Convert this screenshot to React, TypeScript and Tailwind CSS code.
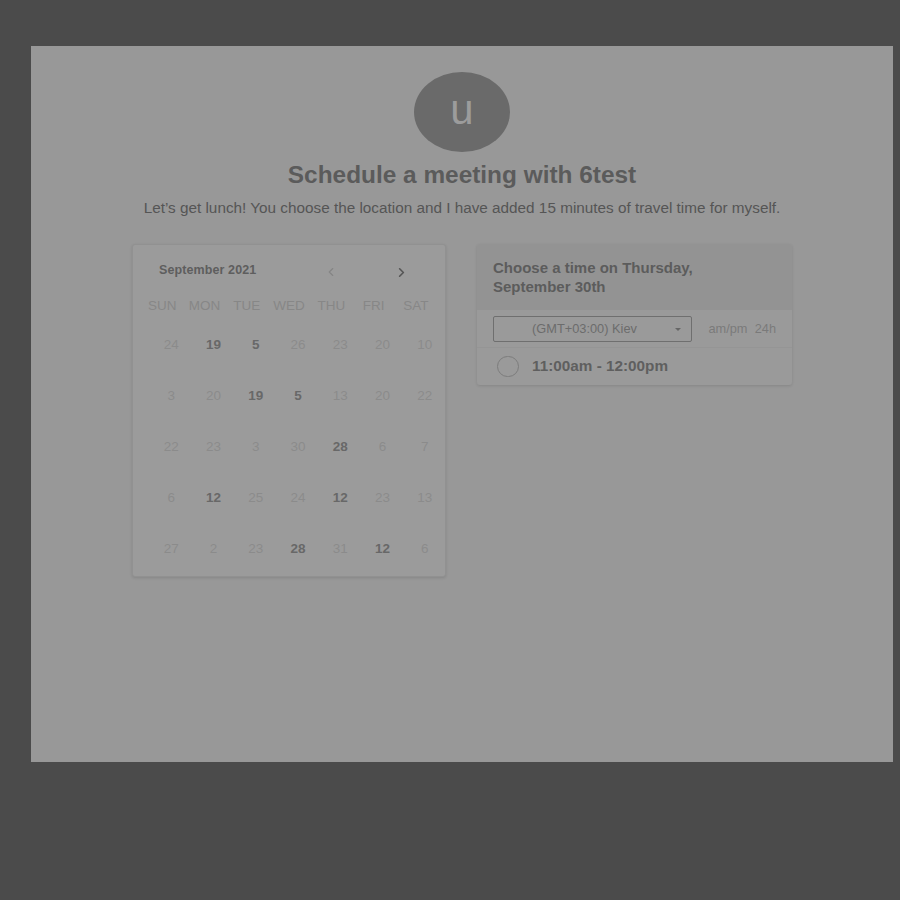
import { ChevronLeft, ChevronRight } from "lucide-react";

const weekdays = ["SUN", "MON", "TUE", "WED", "THU", "FRI", "SAT"];

// [day, available]
const weeks: [string, boolean][][] = [
    [["24", false], ["19", true], ["5", true], ["26", false], ["23", false], ["20", false], ["10", false]],
    [["3", false], ["20", false], ["19", true], ["5", true], ["13", false], ["20", false], ["22", false]],
    [["22", false], ["23", false], ["3", false], ["30", false], ["28", true], ["6", false], ["7", false]],
    [["6", false], ["12", true], ["25", false], ["24", false], ["12", true], ["23", false], ["13", false]],
    [["27", false], ["2", false], ["23", false], ["28", true], ["31", false], ["12", true], ["6", false]],
];

function Calendar() {
    return (
        <div className="w-[314px] h-[333px] rounded-[3px] border border-[#919191] bg-[#9b9b9b] shadow-[0_1px_3px_rgba(0,0,0,0.12)]">
            <div className="flex items-center h-[50px] pl-[26px] pr-[36px]">
                <span className="text-[12.5px] font-bold text-[#5e5e5e] tracking-[0.1px]">September 2021</span>
                <div className="ml-auto flex items-center gap-[56px] pt-[4px]">
                    <ChevronLeft size={14} strokeWidth={2} className="text-[#858585]" />
                    <ChevronRight size={15} strokeWidth={2.6} className="text-[#555555]" />
                </div>
            </div>
            <div className="grid grid-cols-7 px-[8px]">
                {weekdays.map((d) => (
                    <div key={d} className="text-center text-[13.5px] text-[#878787] leading-[22px]">
                        {d}
                    </div>
                ))}
            </div>
            <div className="px-[8px] pt-[17px]">
                {weeks.map((row, i) => (
                    <div key={i} className="grid grid-cols-7 h-[51px]">
                        {row.map(([n, on], j) => (
                            <div
                                key={j}
                                className={
                                    on
                                        ? "pl-[18px] text-center text-[13.5px] leading-[22px] font-bold text-[#686868]"
                                        : "pl-[18px] text-center text-[13.5px] leading-[22px] text-[#8b8b8b]"
                                }
                            >
                                {n}
                            </div>
                        ))}
                    </div>
                ))}
            </div>
        </div>
    );
}

function TimePanel() {
    return (
        <div className="w-[315px] self-start rounded-[3px] bg-[#9a9a9a] shadow-[0_1px_3px_rgba(0,0,0,0.12)] overflow-hidden">
            <div className="h-[66px] bg-[#939393] px-[16px] pt-[14px]">
                <p className="text-[15px] leading-[19px] font-bold text-[#5c5c5c]">
                    Choose a time on Thursday,
                    <br />
                    September 30th
                </p>
            </div>
            <div className="flex items-center h-[38px] px-[16px] border-b border-[#959595]">
                <div className="relative flex items-center w-[200px] h-[26px] border border-[#6f6f6f] rounded-[2px]">
                    <span className="pl-[38px] text-[12.8px] text-[#6c6c6c]">(GMT+03:00) Kiev</span>
                    <span className="absolute right-[10px] top-[11px] w-0 h-0 border-l-[3.5px] border-r-[3.5px] border-t-[3.5px] border-l-transparent border-r-transparent border-t-[#666666]" />
                </div>
                <span className="ml-[16px] text-[12.8px] text-[#7a7a7a] whitespace-pre">am/pm  24h</span>
            </div>
            <div className="flex items-center h-[37px] px-[20px]">
                <span className="w-[22px] h-[21px] rounded-full border-[1.5px] border-[#7c7c7c]" />
                <span className="ml-[13px] text-[15.3px] font-bold text-[#5f5f5f]">11:00am - 12:00pm</span>
            </div>
        </div>
    );
}

export default function App() {
    return (
        <div
            className="w-[900px] h-[900px] bg-[#4b4b4b] pl-[31px] pt-[46px]"
            style={{ fontFamily: '"Liberation Sans", Arial, sans-serif' }}
        >
            <div className="w-[862px] h-[716px] bg-[#989898] flex flex-col items-center pt-[26px]">
                <div className="w-[96px] h-[80px] rounded-[50%] bg-[#6a6a6a] flex items-center justify-center">
                    <span className="text-[42px] leading-none text-[#9c9c9c] -mt-[4px]">u</span>
                </div>
                <h1 className="mt-[9px] text-[24.4px] font-bold text-[#5b5b5b] leading-[28px]">
                    Schedule a meeting with 6test
                </h1>
                <p className="mt-[9px] text-[15.3px] text-[#555555] leading-[20px]">
                    Let’s get lunch! You choose the location and I have added 15 minutes of travel time for myself.
                </p>
                <div className="mt-[26px] flex gap-[31px]">
                    <Calendar />
                    <TimePanel />
                </div>
            </div>
        </div>
    );
}
